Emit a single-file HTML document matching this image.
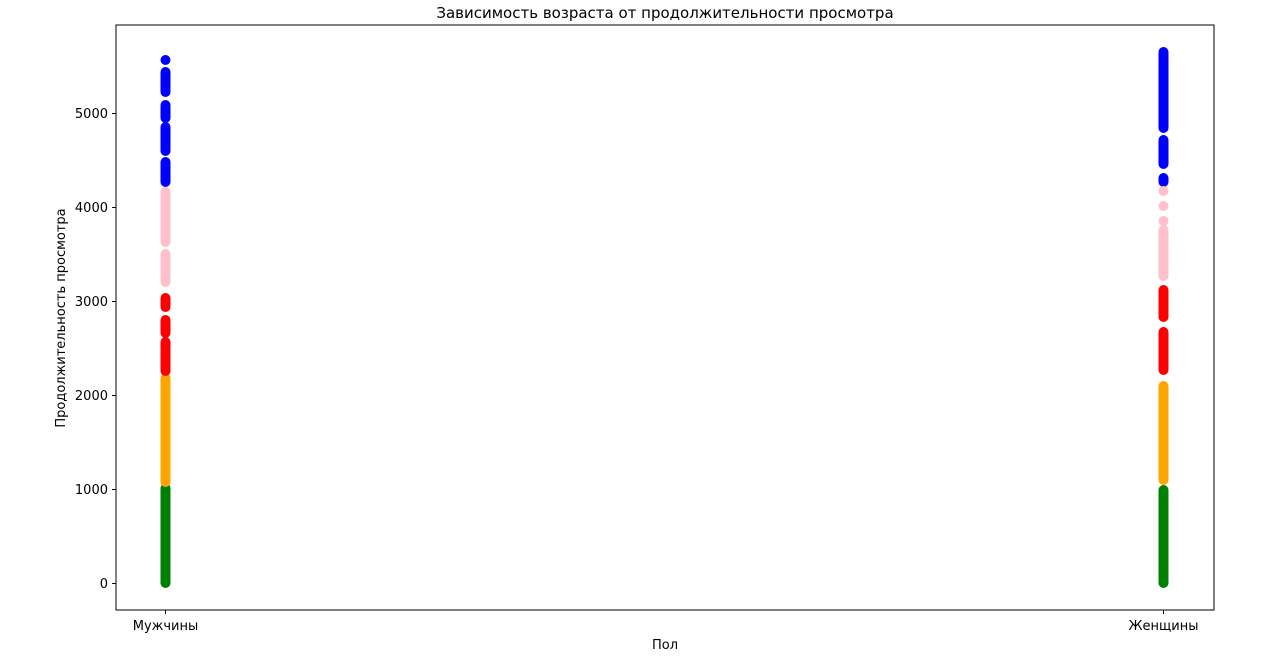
<!DOCTYPE html>
<html><head><meta charset="utf-8"><style>
html,body{margin:0;padding:0;background:#fff;}
svg{display:block;font-family:"DejaVu Sans","Liberation Sans",sans-serif;}
</style></head><body>
<svg width="1280" height="656" viewBox="0 0 1280 656" xmlns="http://www.w3.org/2000/svg">
<rect width="1280" height="656" fill="#fff"/>
<text x="665" y="18" font-size="15" text-anchor="middle" fill="#000">Зависимость возраста от продолжительности просмотра</text>
<g stroke-linecap="round" stroke-width="10" fill="none">
<!-- Men -->
<line x1="165.5" y1="583" x2="165.5" y2="488" stroke="#008000"/>
<line x1="165.5" y1="482" x2="165.5" y2="378" stroke="#ffa500"/>
<line x1="165.5" y1="370" x2="165.5" y2="342" stroke="#ff0000"/>
<line x1="165.5" y1="333" x2="165.5" y2="320" stroke="#ff0000"/>
<line x1="165.5" y1="307" x2="165.5" y2="298" stroke="#ff0000"/>
<line x1="165.5" y1="282" x2="165.5" y2="254" stroke="#ffc0cb"/>
<line x1="165.5" y1="242" x2="165.5" y2="192" stroke="#ffc0cb"/>
<line x1="165.5" y1="182" x2="165.5" y2="162" stroke="#0000ff"/>
<line x1="165.5" y1="151" x2="165.5" y2="127" stroke="#0000ff"/>
<line x1="165.5" y1="118" x2="165.5" y2="105" stroke="#0000ff"/>
<line x1="165.5" y1="92" x2="165.5" y2="72" stroke="#0000ff"/>
<!-- Women -->
<line x1="1163.5" y1="583" x2="1163.5" y2="490" stroke="#008000"/>
<line x1="1163.5" y1="480" x2="1163.5" y2="386" stroke="#ffa500"/>
<line x1="1163.5" y1="370" x2="1163.5" y2="332" stroke="#ff0000"/>
<line x1="1163.5" y1="317" x2="1163.5" y2="290" stroke="#ff0000"/>
<line x1="1163.5" y1="276" x2="1163.5" y2="230" stroke="#ffc0cb"/>
<line x1="1163.5" y1="182" x2="1163.5" y2="178" stroke="#0000ff"/>
<line x1="1163.5" y1="164" x2="1163.5" y2="140" stroke="#0000ff"/>
<line x1="1163.5" y1="128" x2="1163.5" y2="52" stroke="#0000ff"/>
</g>
<g>
<circle cx="165.5" cy="60" r="5" fill="#0000ff"/>
<circle cx="165.5" cy="90" r="5" fill="#0000ff"/>
<circle cx="165.5" cy="140" r="5" fill="#0000ff"/>
<circle cx="165.5" cy="371" r="5" fill="#ff0000"/>
<circle cx="1163.5" cy="221" r="5" fill="#ffc0cb"/>
<circle cx="1163.5" cy="206" r="5" fill="#ffc0cb"/>
<circle cx="1163.5" cy="191" r="5" fill="#ffc0cb"/>
</g>
<!-- axes -->
<rect x="116" y="25" width="1098" height="585" fill="none" stroke="#000" stroke-width="1"/>
<g stroke="#000" stroke-width="1">
<line x1="112" y1="583.5" x2="116" y2="583.5"/>
<line x1="112" y1="489.5" x2="116" y2="489.5"/>
<line x1="112" y1="395.5" x2="116" y2="395.5"/>
<line x1="112" y1="301.5" x2="116" y2="301.5"/>
<line x1="112" y1="207.5" x2="116" y2="207.5"/>
<line x1="112" y1="113.5" x2="116" y2="113.5"/>
<line x1="165.5" y1="610" x2="165.5" y2="614"/>
<line x1="1163.5" y1="610" x2="1163.5" y2="614"/>
</g>
<g font-size="13" fill="#000" text-anchor="end">
<text x="108" y="588">0</text>
<text x="108" y="494">1000</text>
<text x="108" y="400">2000</text>
<text x="108" y="306">3000</text>
<text x="108" y="212">4000</text>
<text x="108" y="118">5000</text>
</g>
<g font-size="13" fill="#000" text-anchor="middle">
<text x="165.5" y="630">Мужчины</text>
<text x="1163.5" y="630">Женщины</text>
<text x="665" y="649">Пол</text>
<text transform="translate(65,318) rotate(-90)">Продолжительность просмотра</text>
</g>
</svg>
</body></html>
